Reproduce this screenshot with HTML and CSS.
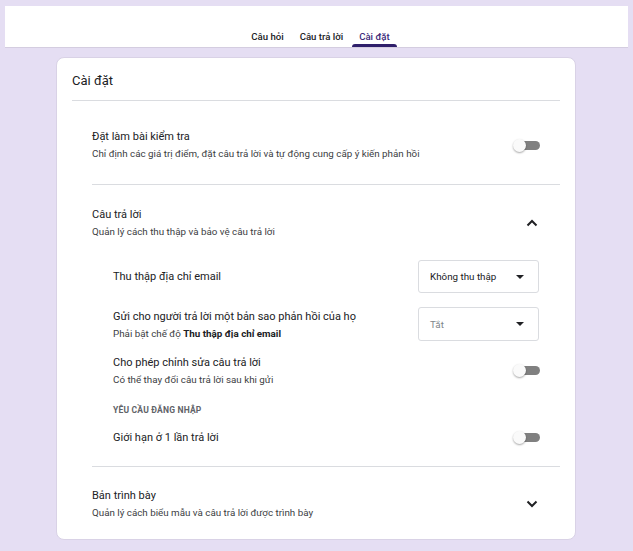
FILE: index.html
```html
<!DOCTYPE html>
<html lang="vi">
<head>
<meta charset="utf-8">
<title>Cài đặt</title>
<link rel="stylesheet" href="styles.css">
</head>
<body>
<header class="topbar">
  <nav class="tabs">
    <span class="tab">Câu hỏi</span>
    <span class="tab">Câu trả lời</span>
    <span class="tab active">Cài đặt</span>
  </nav>
</header>

<main class="card">
  <h1 class="card-title">Cài đặt</h1>

  <section class="section quiz">
    <div class="row">
      <div class="text">
        <div class="title">Đặt làm bài kiểm tra</div>
        <div class="sub">Chỉ định các giá trị điểm, đặt câu trả lời và tự động cung cấp ý kiến phản hồi</div>
      </div>
      <span class="toggle"></span>
    </div>
  </section>

  <section class="section answers">
    <div class="row head">
      <div class="text">
        <div class="title">Câu trả lời</div>
        <div class="sub">Quản lý cách thu thập và bảo vệ câu trả lời</div>
      </div>
      <svg class="chev" width="12" height="8" viewBox="0 0 12 8"><path d="M1.5 6.5 L6 2 L10.5 6.5" fill="none" stroke="#202124" stroke-width="2"/></svg>
    </div>

    <div class="items">
      <div class="item r1">
        <div class="label">Thu thập địa chỉ email</div>
        <div class="select"><span>Không thu thập</span><span class="caret"></span></div>
      </div>
      <div class="item r2">
        <div class="text">
          <div class="label">Gửi cho người trả lời một bản sao phản hồi của họ</div>
          <div class="sub">Phải bật chế độ <b>Thu thập địa chỉ email</b></div>
        </div>
        <div class="select disabled"><span>Tắt</span><span class="caret"></span></div>
      </div>
      <div class="item r3">
        <div class="text">
          <div class="label">Cho phép chỉnh sửa câu trả lời</div>
          <div class="sub">Có thể thay đổi câu trả lời sau khi gửi</div>
        </div>
        <span class="toggle"></span>
      </div>
      <div class="caption">YÊU CẦU ĐĂNG NHẬP</div>
      <div class="item r4">
        <div class="label">Giới hạn ở 1 lần trả lời</div>
        <span class="toggle"></span>
      </div>
    </div>
  </section>

  <section class="section present">
    <div class="row head">
      <div class="text">
        <div class="title">Bản trình bày</div>
        <div class="sub">Quản lý cách biểu mẫu và câu trả lời được trình bày</div>
      </div>
      <svg class="chev" width="12" height="8" viewBox="0 0 12 8"><path d="M1.5 1.5 L6 6 L10.5 1.5" fill="none" stroke="#202124" stroke-width="2"/></svg>
    </div>
  </section>
</main>
</body>
</html>
```

FILE: styles.css
```css
* { box-sizing: border-box; }
html, body { margin: 0; padding: 0; }
body {
  background: #e5def3;
  font-family: Roboto, "Noto Sans", "Liberation Sans", sans-serif;
  color: #202124;
  width: 633px;
  height: 551px;
  padding-top: 6px;
  overflow: hidden;
}
.topbar {
  margin: 0 5px;
  height: 42px;
  background: #fff;
  border-bottom: 1px solid #d4cde0;
  display: flex;
  justify-content: center;
  align-items: flex-end;
  padding-left: 8px;
}
.tabs { display: flex; gap: 2px; }
.tab {
  font-size: 9.6px;
  font-weight: 500;
  color: #202124;
  padding: 0 7px;
  height: 41px;
  line-height: 14px;
  padding-top: 24px;
  position: relative;
}
.tab.active { color: #3c2a7a; }
.tab.active::after {
  content: "";
  position: absolute;
  left: 0; right: 0; bottom: 0;
  height: 3px;
  background: #2f1f6b;
  border-radius: 3px 3px 0 0;
}
.card {
  margin: 9px 0 0 56px;
  width: 520px;
  height: 483px;
  background: #fff;
  border: 1px solid #d9d2e6;
  border-radius: 8px;
  padding: 0 15px;
}
.card-title {
  margin: 0;
  font-size: 13px;
  font-weight: 400;
  line-height: 20px;
  padding: 13px 0 9px;
  border-bottom: 1px solid #dadce0;
}
.section {
  margin-left: 20px;
  border-bottom: 1px solid #dadce0;
}
.section.present { border-bottom: none; }
.row {
  display: flex;
  align-items: center;
  justify-content: space-between;
  padding-right: 20px;
}
.quiz .row { padding-top: 27px; padding-bottom: 23px; }
.quiz .toggle { margin-top: 2px; }
.title { font-size: 11px; line-height: 17px; }
.sub { font-size: 9.8px; line-height: 15px; color: #3c4043; margin-top: 1px; }
.sub b { font-weight: 700; color: #202124; }
.answers .head { padding-top: 21px; }
.present .head { padding-top: 20px; }
.chev { margin-right: 2px; }
.toggle {
  position: relative;
  width: 27px;
  height: 13px;
  display: inline-block;
  flex: none;
}
.toggle::before {
  content: "";
  position: absolute;
  left: 5px; right: 0; top: 2px;
  height: 9px;
  background: #808080;
  border-radius: 5px;
}
.toggle::after {
  content: "";
  position: absolute;
  left: 0; top: 0;
  width: 13px; height: 13px;
  border-radius: 50%;
  background: #fafafa;
  box-shadow: 0 1px 2px rgba(0,0,0,.35);
}
.items { padding-left: 21px; padding-right: 21px; padding-bottom: 20px; }
.item {
  display: flex;
  align-items: center;
  justify-content: space-between;
}
.item .toggle { margin-right: -1px; }
.label { font-size: 11px; line-height: 17px; }
.r1 { margin-top: 21px; }
.r2 { margin-top: 14px; }
.r3 { margin-top: 13px; }
.r4 { margin-top: 12px; height: 18px; }
.select {
  width: 121px;
  height: 33px;
  border: 1px solid #dadce0;
  border-radius: 3px;
  display: flex;
  align-items: center;
  justify-content: space-between;
  padding: 0 14px 0 11px;
  font-size: 9.8px;
  color: #202124;
}
.r2 .select { height: 34px; }
.select.disabled { color: #80868b; }
.caret {
  width: 0; height: 0;
  border-left: 4px solid transparent;
  border-right: 4px solid transparent;
  border-top: 4px solid #202124;
}
.caption {
  margin-top: 17px;
  font-size: 8.5px;
  font-weight: 700;
  letter-spacing: 0.2px;
  color: #5f6368;
  line-height: 12px;
}
```
